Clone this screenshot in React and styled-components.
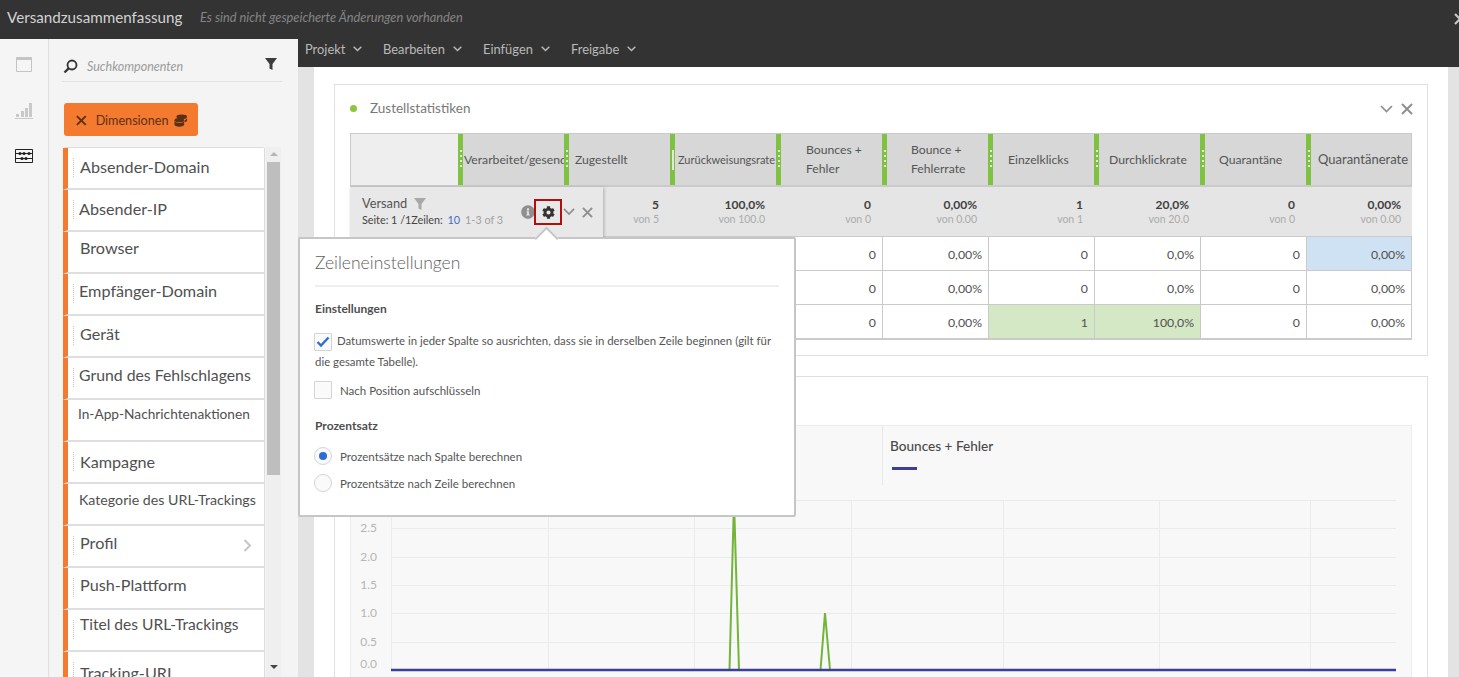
import React from 'react';
import styled, { createGlobalStyle } from 'styled-components';
import { FaCog, FaInfoCircle } from 'react-icons/fa';

const GlobalStyle = createGlobalStyle`
	html, body, #root {
		margin: 0;
		height: 100%;
	}
	body {
		overflow: hidden;
		font-family: Lato, "Open Sans", "Liberation Sans", sans-serif;
		color: #4b4b4b;
	}
	* {
		box-sizing: border-box;
	}
`

const Page = styled.div`
	height: 100vh;
	display: flex;
	flex-direction: column;
	overflow: hidden;
`

const TopBar = styled.header`
	height: 39px;
	flex: none;
	background-color: #333;
	display: flex;
	align-items: center;
	padding: 0 0 6px 7px;
	position: relative;
`

const Title = styled.h1`
	margin: 0;
	font-size: 15.2px;
	font-weight: 400;
	color: #d2d2d2;
	width: 193px;
`

const Unsaved = styled.span`
	font-size: 12.8px;
	font-style: italic;
	color: #858585;
`

const CloseApp = styled.span`
	position: absolute;
	left: 1454px;
	top: 13px;
	display: flex;
`

const Body = styled.div`
	flex: 1;
	display: flex;
	min-height: 0;
`

const Rail = styled.nav`
	width: 49px;
	flex: none;
	background-color: #f5f5f5;
	border-right: 1px solid #dedede;
	display: flex;
	flex-direction: column;
	align-items: center;
	padding-top: 18px;
	gap: 30px;
`

const RailIcon = styled.svg`
	display: block;
`

const Sidebar = styled.aside`
	width: 249px;
	flex: none;
	background-color: #f4f4f4;
	padding: 14px 15px 0 13px;
	display: flex;
	flex-direction: column;
	overflow: hidden;
`

const SearchRow = styled.div`
	height: 29px;
	flex: none;
	display: flex;
	align-items: center;
	border-bottom: 1px solid #e2e2e2;
	padding: 0 5px 2px 1px;
	margin-right: 1px;
`

const SearchText = styled.span`
	flex: 1;
	margin-left: 9px;
	padding-top: 1px;
	font-size: 12.5px;
	font-style: italic;
	color: #9b9b9b;
`

const SearchFilter = styled.span`
	display: flex;
	margin-bottom: 4px;
`

const DimensionButton = styled.button`
	width: 134px;
	height: 33px;
	flex: none;
	margin: 21px 0 11px 2px;
	padding: 1px 10px 0 12px;
	display: flex;
	align-items: center;
	background-color: #f47a30;
	border: 0;
	border-radius: 3px;
	color: #5b3015;
	font-family: inherit;
	font-size: 12.6px;
`

const ButtonLabel = styled.span`
	margin: 0 6px 0 9px;
`

const ListWrap = styled.div`
	flex: 1;
	min-height: 0;
	display: flex;
	margin-left: 1px;
`

const List = styled.ul`
	width: 202px;
	flex: none;
	margin: 0;
	padding: 0;
	list-style: none;
	border-top: 1px solid #dcdcdc;
	border-radius: 3px 3px 0 0;
`

const Item = styled.li`
	height: 42px;
	position: relative;
	background-color: #fff;
	border-left: 5px solid #f47a30;
	border-right: 1px solid #dcdcdc;
	border-bottom: 2px solid #dedede;
	padding-top: ${props => props.$top}px;
	padding-left: ${props => props.$left}px;
	font-size: ${props => props.$size || 16.2}px;
	line-height: 20px;
	color: #505050;
	white-space: nowrap;
	${props => props.$dots && `
		&::before {
			content: '';
			position: absolute;
			left: 5px;
			top: 10px;
			height: 19px;
			border-left: 1px dotted #c4c4c4;
		}
	`}
`

const ItemArrow = styled.svg`
	position: absolute;
	right: 12px;
	top: 13px;
`

const Scrollbar = styled.div`
	width: 15px;
	flex: none;
	margin-left: 1px;
	background-color: #efefef;
	display: flex;
	flex-direction: column;
	align-items: center;
	padding: 5px 1px;
`

const ScrollThumb = styled.div`
	width: 13px;
	height: 313px;
	flex: none;
	margin-top: 6px;
	background-color: #bebebe;
`

const ScrollArrow = styled.div`
	width: 0;
	height: 0;
	flex: none;
	border-left: 4px solid transparent;
	border-right: 4px solid transparent;
	${props => props.$down
		? `border-top: 4px solid #444; margin-top: auto; margin-bottom: 3px;`
		: `border-bottom: 4px solid #b5b5b5;`}
`

const Main = styled.main`
	flex: 1;
	min-width: 0;
	display: flex;
	flex-direction: column;
`

const Menu = styled.nav`
	height: 28px;
	flex: none;
	background-color: #333;
	display: flex;
	align-items: center;
	padding: 0 0 8px 7px;
`

const MenuItem = styled.span`
	width: ${props => props.$width}px;
	display: flex;
	align-items: center;
	gap: 8px;
	font-size: 12.9px;
	color: #b9b9b9;
`

const Content = styled.div`
	flex: 1;
	min-height: 0;
	background-color: #e3e3e3;
	padding: 0 11px 0 16px;
	overflow: hidden;
`

const Canvas = styled.div`
	height: 100%;
	background-color: #fff;
	padding: 17px 20px 0;
	display: flex;
	flex-direction: column;
	gap: 20px;
`

const Card = styled.section`
	flex: none;
	border: 1px solid #e0e0e0;
	padding: 0 15px;
	height: ${props => props.$height}px;
`

const CardHead = styled.div`
	height: 48px;
	display: flex;
	align-items: center;
	font-size: 13.5px;
	color: #787878;
	padding: 0 0 2px 0;
`

const Dot = styled.span`
	width: 7px;
	height: 7px;
	margin: 0 13px 0 0;
	border-radius: 50%;
	background-color: #8cc63f;
`

const CardTools = styled.span`
	margin-left: auto;
	margin-right: -1px;
	padding-top: 2px;
	display: flex;
	align-items: center;
	gap: 8px;
`

const TableWrap = styled.div`
	position: relative;
	width: 1062px;
`

const Table = styled.div`
	display: grid;
	grid-template-columns: 108px repeat(9, 106px);
	grid-template-rows: 54px 50px repeat(3, 34px);
	border-bottom: 1px solid #cacaca;
`

const Corner = styled.div`
	background-color: #eee;
	border: 1px solid #cacaca;
	border-right: 0;
	border-bottom: 2px solid #cacaca;
`

const HeadCell = styled.div`
	display: flex;
	background-color: #d7d7d7;
	border-top: 1px solid #cacaca;
	border-bottom: 2px solid #cacaca;
	border-right: ${props => props.$last ? '1px solid #cacaca' : '0'};
	color: #555;
	overflow: hidden;
`

const Grip = styled.span`
	width: 5px;
	flex: none;
	background-color: #7fc241;
	display: flex;
	align-items: center;
	justify-content: center;
	&::after {
		content: '';
		width: 2px;
		height: 20px;
		background: ${props => props.$solid
			? '#dfe9d4'
			: 'repeating-linear-gradient(to bottom, #dfe9d4 0 2px, transparent 2px 5px)'};
	}
`

const HeadLabel = styled.span`
	padding-left: ${props => props.$pad}px;
	margin-bottom: ${props => props.$lift ? 2 : 0}px;
	align-self: center;
	white-space: nowrap;
	font-size: ${props => props.$size || 12.2}px;
	line-height: 19px;
`

const Total = styled.div`
	background-color: #e5e5e5;
	border-bottom: 1px solid #cacaca;
	padding: 11px 11px 0 0;
	text-align: right;
	font-size: 12px;
	font-weight: 700;
	line-height: 14px;
	color: #3f3f3f;
`

const TotalOf = styled.div`
	font-size: 10.5px;
	font-weight: 400;
	color: #ababab;
`

const Cell = styled.div`
	display: flex;
	align-items: center;
	justify-content: flex-end;
	padding: 1px 6px 0 0;
	background-color: ${props => props.$bg || '#fff'};
	border-bottom: 1px solid #cacaca;
	border-left: 1px solid #cacaca;
	border-right: ${props => props.$last ? '1px solid #cacaca' : '0'};
	font-size: 12.3px;
	color: #505050;
`

const RowBar = styled.div`
	position: absolute;
	left: 0;
	top: 54px;
	width: 253px;
	height: 50px;
	background-color: #e8e8e8;
	box-shadow: 1px 1px 3px rgba(0, 0, 0, 0.25);
	padding: 0 10px 0 12px;
	display: flex;
	align-items: center;
`

const RowInfo = styled.div`
	flex: 1;
	padding-bottom: 1px;
`

const RowName = styled.div`
	display: flex;
	align-items: center;
	gap: 7px;
	font-size: 12.8px;
	line-height: 17px;
	color: #555;
`

const Pager = styled.div`
	font-size: 10.8px;
	line-height: 16px;
	color: #444;
	white-space: nowrap;
`

const PagerLink = styled.span`
	color: #3f6fc4;
	margin: 0 5px 0 2px;
`

const PagerCount = styled.span`
	color: #a0a0a0;
`

const InfoMark = styled.span`
	display: flex;
	margin-right: -1px;
	color: #8f8f8f;
`

const GearBox = styled.span`
	width: 28px;
	height: 26px;
	flex: none;
	display: flex;
	align-items: center;
	justify-content: center;
	border: 2px solid #b40d0d;
	color: #333;
`

const RowTools = styled.span`
	display: flex;
	align-items: center;
	gap: 7px;
	margin-left: 1px;
`

const Popover = styled.div`
	position: absolute;
	left: -52px;
	top: 104px;
	width: 498px;
	height: 280px;
	z-index: 2;
	background-color: #fff;
	border: 2px solid #c6c6c6;
	border-radius: 2px;
	padding: 11px 15px 0 15px;
	&::before {
		content: '';
		position: absolute;
		left: 238px;
		top: -9px;
		width: 15px;
		height: 15px;
		background-color: #fff;
		border-left: 2px solid #c6c6c6;
		border-top: 2px solid #c6c6c6;
		transform: rotate(45deg);
	}
`

const PopTitle = styled.h2`
	margin: 0;
	height: 37px;
	font-size: 17.5px;
	font-weight: 300;
	line-height: 26px;
	color: #5e5e5e;
	border-bottom: 2px solid #eeeeee;
`

const PopSection = styled.h3`
	margin: ${props => props.$gap}px 0 0;
	font-size: 12px;
	font-weight: 700;
	line-height: 16px;
	color: #4f4f4f;
`

const PopText = styled.p`
	margin: 13px 0 0;
	font-size: 11.42px;
	line-height: 21px;
	color: #555;
`

const Check = styled.span`
	width: 18px;
	height: 18px;
	flex: none;
	display: inline-flex;
	align-items: center;
	justify-content: center;
	vertical-align: middle;
	margin-left: -1px;
	margin-right: ${props => props.$gap}px;
	background-color: #fafafa;
	border: 1px solid #d4d4d4;
	border-radius: 1px;
`

const OptionRow = styled.div`
	display: flex;
	align-items: center;
	height: 18px;
	margin-top: ${props => props.$gap}px;
	font-size: 11.5px;
	color: #555;
`

const Radio = styled.span`
	width: 18px;
	height: 18px;
	flex: none;
	margin: 0 8px 0 -1px;
	display: flex;
	align-items: center;
	justify-content: center;
	background-color: #fafafa;
	border: 1px solid #d4d4d4;
	border-radius: 50%;
	&::after {
		content: '';
		width: 8px;
		height: 8px;
		border-radius: 50%;
		background-color: ${props => props.$on ? '#2d6fd0' : 'transparent'};
	}
`

const ChartBox = styled.div`
	height: 300px;
	width: 1062px;
	background-color: #f8f8f8;
	border: 1px solid #ececec;
`

const Legend = styled.div`
	height: 59px;
	padding-left: 531px;
	display: flex;
`

const LegendItem = styled.div`
	flex: 1;
	border-left: 1px solid #e8e8e8;
	padding: 11px 0 0 7px;
	font-size: 13.6px;
	font-weight: 500;
	line-height: 18px;
	color: #4a4a4a;
`

const LegendKey = styled.div`
	width: 25px;
	height: 3px;
	margin: 12px 0 0 2px;
	background-color: #3b3f98;
`

const ChartSvg = styled.svg`
	display: block;
	margin-top: 15px;
`

const items = [
	{ name: 'Absender-Domain', top: 9, left: 12, dots: true },
	{ name: 'Absender-IP', top: 9, left: 11, dots: true },
	{ name: 'Browser', top: 6, left: 12 },
	{ name: 'Empfänger-Domain', top: 7, left: 11, dots: true },
	{ name: 'Gerät', top: 8, left: 12, dots: true },
	{ name: 'Grund des Fehlschlagens', top: 7, left: 11, size: 15.8, dots: true },
	{ name: 'In-App-Nachrichtenaktionen', top: 4, left: 10, size: 13.7 },
	{ name: 'Kampagne', top: 10, left: 12, dots: true },
	{ name: 'Kategorie des URL-Trackings', top: 6, left: 11, size: 14.2 },
	{ name: 'Profil', top: 7, left: 12, dots: true, arrow: true },
	{ name: 'Push-Plattform', top: 7, left: 12, dots: true },
	{ name: 'Titel des URL-Trackings', top: 4, left: 12, size: 15.6, dots: true },
	{ name: 'Tracking-URL', top: 11, left: 12, dots: true },
];

const headers = [
	{ label: 'Verarbeitet/gesendet', pad: 1 },
	{ label: 'Zugestellt', pad: 6 },
	{ label: 'Zurückweisungsrate', pad: 3, size: 11, solid: true },
	{ label: <>Bounces +<br />Fehler</>, pad: 25, lift: true },
	{ label: <>Bounce +<br />Fehlerrate</>, pad: 24, lift: true },
	{ label: 'Einzelklicks', pad: 15 },
	{ label: 'Durchklickrate', pad: 10 },
	{ label: 'Quarantäne', pad: 14 },
	{ label: 'Quarantänerate', pad: 7, size: 13 },
];

const totals = [
	['', ''], ['5', 'von 5'], ['100,0%', 'von 100.0'], ['0', 'von 0'], ['0,00%', 'von 0.00'],
	['1', 'von 1'], ['20,0%', 'von 20.0'], ['0', 'von 0'], ['0,00%', 'von 0.00'],
];

const BLUE = '#cfe2f3';
const GREEN = '#d5e8c5';

const rows = [
	[['0'], ['0,00%'], ['0'], ['0,0%'], ['0'], ['0,00%', BLUE]],
	[['0'], ['0,00%'], ['0'], ['0,0%'], ['0'], ['0,00%']],
	[['0'], ['0,00%'], ['1', GREEN], ['100,0%', GREEN], ['0'], ['0,00%']],
];

// gridlines of the plot, in svg coordinates (svg starts at x=351, y=500 on the page)
const gridX = [40, 197, 343, 500, 652, 808, 959];
const gridY = [
	{ y: 0 },
	{ y: 28, label: '2.5' },
	{ y: 57, label: '2.0' },
	{ y: 85, label: '1.5' },
	{ y: 113, label: '1.0' },
	{ y: 142, label: '0.5' },
];

function Funnel({ size = 12, color = '#444' }) {
	return (
		<svg width={size} height={size} viewBox="0 0 12 12">
			<path d="M0 0h12L7.5 6v6l-3-1.500V6z" fill={color} />
		</svg>
	);
}

function Chevron({ width = 13, color = '#8f8f8f', stroke = 1.7 }) {
	return (
		<svg width={width} height={width * 0.62} viewBox="0 0 13 8">
			<path d="M1 1l5.500 5.500L12 1" fill="none" stroke={color} strokeWidth={stroke * 13 / width} />
		</svg>
	);
}

function Cross({ size = 12, color = '#8f8f8f', stroke = 2 }) {
	return (
		<svg width={size} height={size} viewBox="0 0 12 12">
			<path d="M1 1l10 10M11 1L1 11" fill="none" stroke={color} strokeWidth={stroke * 12 / size} />
		</svg>
	);
}

function Chart() {
	return (
		<ChartSvg width="1060" height="178" viewBox="0 0 1060 178">
			{gridY.map(g => (
				<g key={g.y}>
					<line x1="40" x2="1045" y1={g.y + 0.5} y2={g.y + 0.5} stroke="#ebebeb" />
					{g.label && <text x="26" y={g.y + 4} textAnchor="end" fontSize="12" fill="#b5b5b5">{g.label}</text>}
				</g>
			))}
			<text x="26" y="168" textAnchor="end" fontSize="12" fill="#b5b5b5">0.0</text>
			{gridX.map(x => (
				<line key={x} x1={x + 0.5} x2={x + 0.5} y1="0" y2="170" stroke="#ebebeb" />
			))}
			<path d="M378.500 170L383 0L388 170" fill="none" stroke="#72b53a" strokeWidth="2" />
			<path d="M469.500 170L474 113L479 170" fill="none" stroke="#72b53a" strokeWidth="2" />
			<line x1="40" x2="1045" y1="170" y2="170" stroke="#3b3f98" strokeWidth="2.500" />
		</ChartSvg>
	);
}

export default function App() {
	return (
		<Page>
			<GlobalStyle />
			<TopBar>
				<Title>Versandzusammenfassung</Title>
				<Unsaved>Es sind nicht gespeicherte Änderungen vorhanden</Unsaved>
				<CloseApp><Cross size={12} color="#c8c8c8" stroke={2.2} /></CloseApp>
			</TopBar>
			<Body>
				<Rail>
					<RailIcon width="18" height="15" viewBox="0 0 18 15">
						<path d="M1.500 .5h15v14h-15z" fill="none" stroke="#c4c4c4" />
						<path d="M1 1h16v2H1z" fill="#c4c4c4" />
					</RailIcon>
					<RailIcon width="18" height="17" viewBox="0 0 18 17">
						<path d="M1 12h3v3H1zM6 9h3v6H6zM10 6h3v9h-3zM14 1h3v14h-3zM0 16h18v1H0z" fill="#c9c9c9" />
					</RailIcon>
					<RailIcon width="18" height="14" viewBox="0 0 18 14">
						<path d="M.5.5h17v13H.5z" fill="none" stroke="#222" />
						<path d="M1 4h16v1H1zM1 9h16v1H1z" fill="#222" />
						<circle cx="5" cy="4.500" r="1.600" fill="#222" />
						<circle cx="9" cy="4.500" r="1.600" fill="#222" />
						<circle cx="14" cy="4.500" r="1.600" fill="#222" />
						<circle cx="7" cy="9.500" r="1.600" fill="#222" />
						<circle cx="11" cy="9.500" r="1.600" fill="#222" />
					</RailIcon>
				</Rail>
				<Sidebar>
					<SearchRow>
						<svg width="15" height="15" viewBox="0 0 15 15">
							<circle cx="9" cy="6" r="4.500" fill="none" stroke="#333" strokeWidth="1.800" />
							<path d="M5.600 9.400L1.500 13.500" stroke="#333" strokeWidth="2.200" />
						</svg>
						<SearchText>Suchkomponenten</SearchText>
						<SearchFilter><Funnel size={12} color="#3c3c3c" /></SearchFilter>
					</SearchRow>
					<DimensionButton>
						<Cross size={11} color="#5b3015" stroke={2} />
						<ButtonLabel>Dimensionen</ButtonLabel>
						<svg width="14" height="13" viewBox="0 0 14 13">
							<ellipse cx="8" cy="2.600" rx="5.500" ry="2.400" fill="#5b3015" />
							<path d="M13.500 4v2.400c0 .8-1 1.500-2.500 2V6.200C12.200 5.800 13 5 13.500 4z" fill="#5b3015" />
							<ellipse cx="5.500" cy="6.200" rx="5" ry="2.200" fill="#5b3015" />
							<path d="M.5 7.400c.9 1 2.800 1.600 5 1.600s4.100-.6 5-1.600v3.600c0 1.100-2.200 2-5 2s-5-.9-5-2z" fill="#5b3015" />
						</svg>
					</DimensionButton>
					<ListWrap>
						<List>
							{items.map(item => (
								<Item key={item.name} $top={item.top} $left={item.left} $size={item.size} $dots={item.dots}>
									{item.name}
									{item.arrow && (
										<ItemArrow width="9" height="13" viewBox="0 0 9 13">
											<path d="M1.500 1l5.500 5.500L1.500 12" fill="none" stroke="#c6c6c6" strokeWidth="2" />
										</ItemArrow>
									)}
								</Item>
							))}
						</List>
						<Scrollbar>
							<ScrollArrow />
							<ScrollThumb />
							<ScrollArrow $down />
						</Scrollbar>
					</ListWrap>
				</Sidebar>
				<Main>
					<Menu>
						<MenuItem $width={78}>Projekt <Chevron width={9} color="#b9b9b9" stroke={1.5} /></MenuItem>
						<MenuItem $width={100}>Bearbeiten <Chevron width={9} color="#b9b9b9" stroke={1.5} /></MenuItem>
						<MenuItem $width={88}>Einfügen <Chevron width={9} color="#b9b9b9" stroke={1.5} /></MenuItem>
						<MenuItem $width={80}>Freigabe <Chevron width={9} color="#b9b9b9" stroke={1.5} /></MenuItem>
					</Menu>
					<Content>
						<Canvas>
							<Card $height={272}>
								<CardHead>
									<Dot />
									Zustellstatistiken
									<CardTools>
										<Chevron width={13} />
										<Cross size={12} />
									</CardTools>
								</CardHead>
								<TableWrap>
									<Table>
										<Corner />
										{headers.map((h, i) => (
											<HeadCell key={i} $last={i === headers.length - 1}>
												<Grip $solid={h.solid} />
												<HeadLabel $pad={h.pad} $size={h.size} $lift={h.lift}>{h.label}</HeadLabel>
											</HeadCell>
										))}
										<Total />
										{totals.map((t, i) => (
											<Total key={i}>
												{t[0]}
												<TotalOf>{t[1]}</TotalOf>
											</Total>
										))}
										{rows.map((row, r) => (
											<React.Fragment key={r}>
												<Cell />
												<Cell />
												<Cell />
												<Cell />
												{row.map((c, i) => (
													<Cell key={i} $bg={c[1]} $last={i === row.length - 1}>{c[0]}</Cell>
												))}
											</React.Fragment>
										))}
									</Table>
									<RowBar>
										<RowInfo>
											<RowName>Versand <Funnel size={12} color="#a8a8a8" /></RowName>
											<Pager>
												Seite: 1 /1Zeilen: <PagerLink>10</PagerLink><PagerCount>1-3 of 3</PagerCount>
											</Pager>
										</RowInfo>
										<InfoMark><FaInfoCircle size={14} /></InfoMark>
										<GearBox><FaCog size={13} /></GearBox>
										<RowTools>
											<Chevron width={12} />
											<Cross size={11} />
										</RowTools>
									</RowBar>
									<Popover>
										<PopTitle>Zeileneinstellungen</PopTitle>
										<PopSection $gap={14}>Einstellungen</PopSection>
										<PopText>
											<Check $gap={5}>
												<svg width="14" height="12" viewBox="0 0 14 12">
													<path d="M1.500 6l3.500 3.500L12.500 1.500" fill="none" stroke="#2d6fd0" strokeWidth="2.400" />
												</svg>
											</Check>
											Datumswerte in jeder Spalte so ausrichten, dass sie in derselben Zeile beginnen (gilt für die gesamte Tabelle).
										</PopText>
										<OptionRow $gap={9}>
											<Check $gap={8} />
											Nach Position aufschlüsseln
										</OptionRow>
										<PopSection $gap={19}>Prozentsatz</PopSection>
										<OptionRow $gap={13}>
											<Radio $on />
											Prozentsätze nach Spalte berechnen
										</OptionRow>
										<OptionRow $gap={9}>
											<Radio />
											Prozentsätze nach Zeile berechnen
										</OptionRow>
									</Popover>
								</TableWrap>
							</Card>
							<Card $height={320}>
								<CardHead />
								<ChartBox>
									<Legend>
										<LegendItem>
											Bounces + Fehler
											<LegendKey />
										</LegendItem>
									</Legend>
									<Chart />
								</ChartBox>
							</Card>
						</Canvas>
					</Content>
				</Main>
			</Body>
		</Page>
	);
}
